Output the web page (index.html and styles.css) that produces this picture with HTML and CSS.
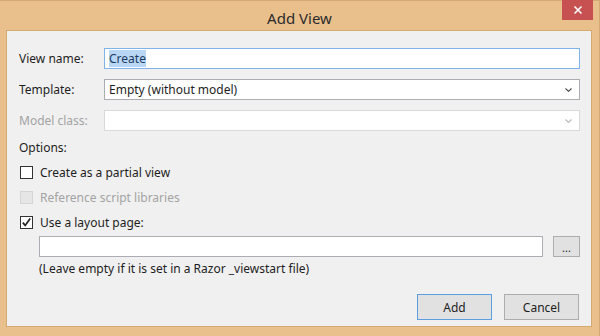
FILE: index.html
```html
<!DOCTYPE html>
<html lang="en">
<head>
    <meta charset="UTF-8">
    <title>Add View</title>
    <link rel="stylesheet" href="styles.css">
</head>
<body>
    <div class="window">
        <div class="title-bar">
            <span></span>
            <div class="title">Add View</div>
            <button class="close-btn" type="button">
                <svg viewBox="0 0 10 10" width="10" height="10">
                    <path d="M1.5 1.5 L8.5 8.5 M8.5 1.5 L1.5 8.5" stroke="#fff" stroke-width="1.6"/>
                </svg>
            </button>
        </div>

        <div class="content">
            <div class="fields">
                <label class="field-label" for="viewName">View name:</label>
                <div class="textbox focused" id="viewName"><span class="selected">Create</span></div>

                <label class="field-label">Template:</label>
                <div class="combo">
                    <span>Empty (without model)</span>
                    <svg class="chevron" viewBox="0 0 7 4" width="7" height="4">
                        <path d="M0.5 0.5 L3.5 3.3 L6.5 0.5" fill="none" stroke="#444" stroke-width="1.1"/>
                    </svg>
                </div>

                <label class="field-label disabled">Model class:</label>
                <div class="combo disabled">
                    <span></span>
                    <svg class="chevron" viewBox="0 0 7 4" width="7" height="4">
                        <path d="M0.5 0.5 L3.5 3.3 L6.5 0.5" fill="none" stroke="#b5b5b5" stroke-width="1.1"/>
                    </svg>
                </div>
            </div>

            <div class="options-label">Options:</div>

            <div class="checks">
                <div class="check-row">
                    <span class="checkbox"></span>
                    <span>Create as a partial view</span>
                </div>
                <div class="check-row disabled">
                    <span class="checkbox"></span>
                    <span>Reference script libraries</span>
                </div>
                <div class="check-row">
                    <span class="checkbox">
                        <svg viewBox="0 0 11 11" width="11" height="11">
                            <path d="M1.8 5.6 L4.2 8.4 L9.2 1.6" fill="none" stroke="#222" stroke-width="1.7"/>
                        </svg>
                    </span>
                    <span>Use a layout page:</span>
                </div>
            </div>

            <div class="layout-row">
                <div class="textbox"></div>
                <button class="btn browse" type="button">...</button>
            </div>
            <div class="note">(Leave empty if it is set in a Razor _viewstart file)</div>

            <div class="actions">
                <button class="btn default" type="button">Add</button>
                <button class="btn" type="button">Cancel</button>
            </div>
        </div>
    </div>
</body>
</html>
```

FILE: styles.css
```css
:root {
    --frame: #e9c08b;
    --frame-edge: #d4aa72;
    --panel: #f0f0f0;
    --text: #1e1e1e;
    --disabled-text: #a3a3a3;
    --box-border: #abadb3;
}

* {
    margin: 0;
    padding: 0;
    box-sizing: border-box;
}

body {
    font-family: "Noto Sans", "Open Sans", sans-serif;
    font-size: 12px;
    color: var(--text);
    background: var(--frame);
}

.window {
    width: 600px;
    height: 336px;
    background: var(--frame);
    border-top: 1px solid var(--frame-edge);
    border-right: 1px solid var(--frame-edge);
    display: flex;
    flex-direction: column;
}

.title-bar {
    height: 29px;
    display: grid;
    grid-template-columns: 1fr auto 1fr;
    align-items: start;
}

.title {
    font-size: 15px;
    color: #2b2b2b;
    line-height: 20px;
    padding-top: 7px;
}

.close-btn {
    justify-self: end;
    width: 31px;
    height: 20px;
    margin-right: 6px;
    margin-top: -1px;
    border: none;
    background: #c75050;
    display: flex;
    align-items: center;
    justify-content: center;
}

.content {
    margin: 0 7px 0 6px;
    height: 297px;
    background: var(--panel);
    border: 1px solid var(--frame-edge);
    padding: 17px 11px 0 12px;
    display: flex;
    flex-direction: column;
}

.fields {
    display: grid;
    grid-template-columns: 85px 1fr;
    row-gap: 10px;
    align-items: center;
}

.field-label {
    line-height: 16px;
}

.disabled {
    color: var(--disabled-text);
}

.textbox,
.combo {
    height: 21px;
    background: #fff;
    border: 1px solid var(--box-border);
    line-height: 19px;
    padding-left: 4px;
}

.textbox.focused {
    border-color: #7eb4ea;
}

.selected {
    background: #b9d7f4;
    color: #1b3a63;
}

.combo {
    display: flex;
    align-items: center;
    justify-content: space-between;
    padding-right: 7px;
}

.combo.disabled {
    border-color: #d9d9d9;
}

.chevron {
    display: block;
}

.options-label {
    margin-top: 9px;
    line-height: 16px;
}

.checks {
    margin-top: 4px;
}

.check-row {
    display: flex;
    align-items: center;
    height: 25px;
    gap: 7px;
    padding-left: 1px;
}

.checkbox {
    width: 13px;
    height: 13px;
    background: #fff;
    border: 1px solid #333;
    display: flex;
    align-items: center;
    justify-content: center;
}

.check-row.disabled .checkbox {
    background: #e6e6e6;
    border-color: #d5d5d5;
}

.layout-row {
    display: flex;
    gap: 10px;
    margin-left: 20px;
    margin-top: 1px;
}

.layout-row .textbox {
    flex: 1;
}

.btn {
    font-family: inherit;
    font-size: 12px;
    color: var(--text);
    background: #e1e1e1;
    border: 1px solid #adadad;
}

.browse {
    width: 27px;
    height: 21px;
    line-height: 12px;
    font-size: 11px;
    padding-top: 3px;
}

.note {
    margin-left: 20px;
    margin-top: 4px;
    line-height: 16px;
}

.actions {
    display: flex;
    justify-content: flex-end;
    gap: 12px;
    margin-top: 17px;
    padding-right: 1px;
}

.actions .btn {
    width: 75px;
    height: 26px;
}

.btn.default {
    border-color: #5b9fe0;
}
```
